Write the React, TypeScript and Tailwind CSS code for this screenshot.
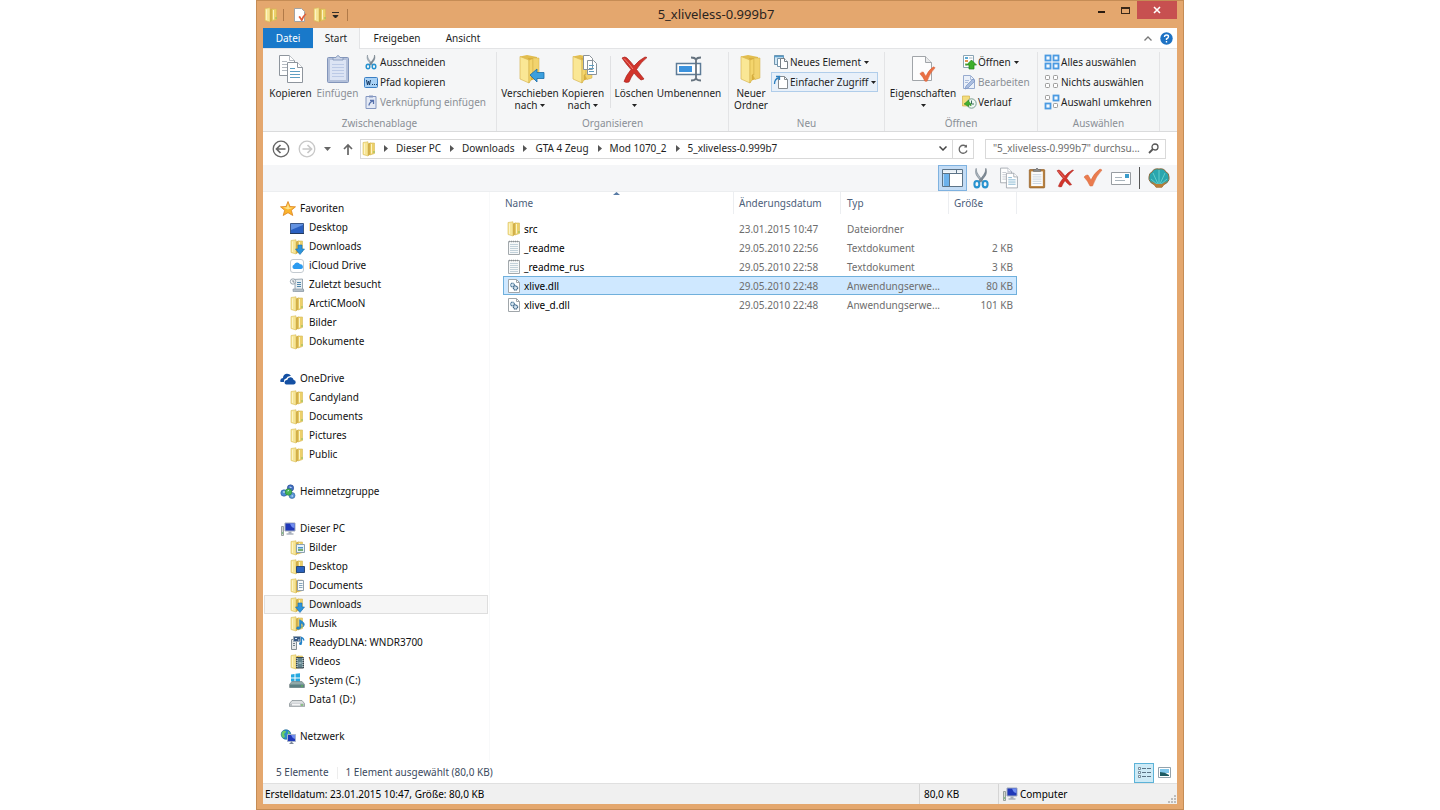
import React from "react";

type IconProps = { className?: string };

function Folder({ className = "h-4 w-4", children }: IconProps & { children?: React.ReactNode }) {
  return (
    <svg className={className} viewBox="0 0 16 16">
      <path d="M2 1.500 7 .8V15L2 13.500z" fill="#f7e596" stroke="#d9bd59" strokeWidth=".6" />
      <path d="M7 2.500 9.500 1.500v12L7 15z" fill="#d2ae48" />
      <path d="M9 2h4.500v10.500L9 14z" fill="#ecd06a" stroke="#d6ba58" strokeWidth=".6" />
      <path d="M3.500 2.500v10.500M10.500 3v9.500" stroke="#fdf4c4" />
      <path d="M13 10v2" stroke="#8fbf5a" />
      {children}
    </svg>
  );
}

function BigFolder({ children }: { children?: React.ReactNode }) {
  return (
    <svg className="h-[30px] w-[30px]" viewBox="0 0 30 30">
      <path d="M5 2.500 12 1l10 2v21l-10 3z" fill="#e2bd4e" />
      <path d="M13 4h10v20l-9 3z" fill="#d9ae3c" />
      <path d="M5 2.500 14 6v23L5 25z" fill="#fae795" stroke="#d8b653" strokeWidth=".7" />
      <path d="M14 6 18 4.500V20l-2 1v5l-2 3z" fill="#f4d56c" stroke="#cfa83f" strokeWidth=".5" />
      <path d="M18 4h6v20l-5 1.500-2-4 1-1z" fill="#f2d36d" stroke="#d3ae48" strokeWidth=".5" />
      {children}
    </svg>
  );
}

function Pages({ className = "h-[30px] w-[30px]" }: IconProps) {
  return (
    <svg className={className} viewBox="0 0 30 30" fill="#fff" stroke="#8e959d">
      <path d="M3.500 1.500h10l5 5v15h-15z" />
      <path d="M13.500 1.500v5h5M6 7.500h5M6 10.500h5M6 13.500h5M6 16.500h5" stroke="#b5bbc2" />
      <path d="M11.500 8.500h10l5 5v15h-15z" />
      <path d="M21.500 8.500v5h5" />
      <path d="M14 14.500h5M14 17.500h10M14 20.500h10M14 23.500h10" stroke="#5f9fc2" />
    </svg>
  );
}

function Clipboard({ className = "h-[30px] w-[30px]", faded = false }: IconProps & { faded?: boolean }) {
  const edge = faded ? "#8295ba" : "#94622b";
  return (
    <svg className={className} viewBox="0 0 30 30">
      <rect x="4.500" y="3.500" width="21" height="25" rx="1" fill={faded ? "#b3c0da" : "#b9803c"} stroke={edge} />
      <path d="M7 6h16v20H7z" fill={faded ? "#dce4f4" : "#fbfbfb"} />
      <path d="M9 10.500h12M9 13.500h12M9 16.500h12M9 19.500h12M9 22.500h12" stroke={faded ? "#bccae6" : "#b7c7d7"} />
      <path d="M10 6V3.500h3q2-4 4 0h3V6z" fill={faded ? "#cbd5e8" : "#8b8d8f"} stroke={faded ? "#7f93b8" : "#666"} strokeWidth=".8" />
    </svg>
  );
}

function Scissors({ className = "h-4 w-4" }: IconProps) {
  return (
    <svg className={className} viewBox="0 0 16 16" fill="none">
      <path d="M4.500 1c0 3 1.500 5 5.500 9.500L8.500 11 5 6.500C4 5 3.800 3 4.500 1z" fill="#aeb9c2" stroke="#77838e" strokeWidth=".5" />
      <path d="M11.500 1c0 3-1.500 5-5.500 9.500L7.500 11 11 6.500C12 5 12.200 3 11.500 1z" fill="#7e8c98" stroke="#66727c" strokeWidth=".5" />
      <ellipse cx="5" cy="12.500" rx="1.800" ry="2.300" stroke="#2792cf" strokeWidth="1.500" />
      <ellipse cx="11" cy="12.500" rx="1.800" ry="2.300" stroke="#2792cf" strokeWidth="1.500" />
    </svg>
  );
}

function RedX({ className = "h-[30px] w-[30px]" }: IconProps) {
  return (
    <svg className={className} viewBox="0 0 30 30">
      <path d="M3 4q3-2 5 0 4 4 7 8 5-6 11-9l2 .5Q22 8 17.500 15.500 21 20 25 25l-3 1q-4-3-7-7-3 4-5 9-3 1-5-.5 2-6 7-12Q7 10 3 4z" fill="#d2342b" stroke="#a8221d" strokeWidth=".7" />
      <path d="M5 4.500q5 5 9 10.500" stroke="#ee8278" fill="none" />
    </svg>
  );
}

const CHECK = "M1 9q2-2.500 4-2l3 5Q11 5 17 1l2 1q-6 6-9.500 16H7Q5 13 1 9z";

function DocCheck() {
  return (
    <svg className="h-[30px] w-[30px]" viewBox="0 0 30 30">
      <path d="M4.500 2.500h13l6 6v18h-19z" fill="#fdfdfd" stroke="#a1a5a9" />
      <path d="M17.500 2.500v6h6" fill="#e9eaeb" stroke="#a1a5a9" />
      <path d={CHECK} transform="translate(11 12) scale(.85)" fill="#ea7044" stroke="#cf5a32" strokeWidth=".5" />
    </svg>
  );
}

function CheckMark() {
  return (
    <svg className="h-5 w-5" viewBox="0 0 20 20">
      <path d={CHECK} fill="#ea7b4e" stroke="#d4683c" strokeWidth=".5" />
    </svg>
  );
}

function Rename() {
  return (
    <svg className="h-[30px] w-[30px]" viewBox="0 0 30 30" fill="none">
      <path d="M2.500 9.500h24v11h-24z" fill="#fff" stroke="#5d7b97" strokeWidth="1.500" />
      <path d="M5 12h13v6H5z" fill="#3b92dd" />
      <path d="M17 3.500q4 0 5 2 1-2 5-2M22 5v20M17 26.500q4 0 5-2 1 2 5 2" stroke="#66737f" strokeWidth="1.800" />
    </svg>
  );
}

function PathIcon() {
  return (
    <svg className="h-4 w-4" viewBox="0 0 16 16">
      <rect x="1.500" y="3.500" width="13" height="10" rx="1" fill="#a8d1f5" stroke="#3b7fc4" />
      <path d="m3.500 6 1 5 1-4 1 4 1-5M9 10.500h1M11 10.500h1M13 10.500h1" fill="none" stroke="#173a63" />
    </svg>
  );
}

function ShortcutIcon() {
  return (
    <svg className="h-4 w-4" viewBox="0 0 16 16" fill="none">
      <path d="M3 2.500h10v12H3z" fill="#e3e9f5" stroke="#8497c0" />
      <path d="M6 1.500h4v2H6z" fill="#8497c0" />
      <path d="M6 11.500q0-3 4-4.500M7 6.500h3.500V10" stroke="#5470ac" strokeWidth="1.300" />
    </svg>
  );
}

function NewItem() {
  return (
    <svg className="h-4 w-4" viewBox="0 0 16 16" fill="#fff" stroke="#7295ad">
      <path d="M1.500 1.500h9v9h-9z" fill="#cfe6f5" />
      <path d="M1 2.500h10" stroke="#5b9cc8" strokeWidth="1.500" />
      <path d="M4.500 4.500h6v8h-6z" />
      <path d="M7.500 4.500h4l3 3v7h-7z" stroke="#777f86" />
      <path d="M11.500 4.500v3h3" stroke="#777f86" />
    </svg>
  );
}

function EasyAccess() {
  return (
    <svg className="h-4 w-4" viewBox="0 0 16 16" fill="none">
      <path d="M5.500 2.500h6l3 3v9h-9z" fill="#fff" stroke="#848b91" />
      <path d="M11.500 2.500v3h3" stroke="#848b91" />
      <path d="M1.500 10q0-5 4-6M3 2.500h3.500V6" stroke="#2d7fbe" strokeWidth="1.300" />
    </svg>
  );
}

function OpenIcon() {
  return (
    <svg className="h-4 w-4" viewBox="0 0 16 16">
      <path d="M2.500 1.500h10v12h-10z" fill="#fff" stroke="#8aa5b5" />
      <path d="M4 3h3v2H4z" fill="#5aa9d5" />
      <path d="M4 6h3v2H4z" fill="#e4924f" />
      <path d="M4 9.500h2v2H4z" fill="#6bab54" />
      <path d="M8 4h3.500" stroke="#a7b6c0" />
      <path d="m10.500 6 5 5H13v4H8v-4H5.500z" fill="#3dae2b" stroke="#23821a" strokeWidth=".7" />
    </svg>
  );
}

function EditIcon() {
  return (
    <svg className="h-4 w-4" viewBox="0 0 16 16">
      <path d="M2.500 1.500h7l4 4v9h-11z" fill="#eaf0f9" stroke="#97abcf" />
      <path d="M9.500 1.500v4h4M4 6.500h4M4 8.500h3" fill="none" stroke="#abbcda" />
      <path d="m5 12 7-7 2 2-7 7-3 1z" fill="#a9bde0" stroke="#7892c2" strokeWidth=".7" />
    </svg>
  );
}

function HistoryIcon() {
  return (
    <svg className="h-4 w-4" viewBox="0 0 16 16">
      <path d="M1.500 2h7v10h-7z" fill="#f3dd7e" stroke="#cda937" strokeWidth=".6" />
      <circle cx="10.500" cy="9.500" r="4.700" fill="#edf7f1" stroke="#7b9e90" />
      <path d="M10.500 6.500V10H13" fill="none" stroke="#3d6c5c" />
      <path d="m3 10 5-4v2q2.500 1 2 4-1-2-2-1.500v2z" fill="#43b02f" stroke="#247f1d" strokeWidth=".5" />
    </svg>
  );
}

function Tiles({ on }: { on: [boolean, boolean, boolean, boolean] }) {
  const at = [[1, 1], [9, 1], [1, 9], [9, 9]];
  return (
    <svg className="h-4 w-4" viewBox="0 0 16 16">
      {on.map((lit, i) =>
        lit ? (
          <rect key={i} x={at[i][0] + 0.5} y={at[i][1] + 0.5} width="5" height="5" fill="#f4faff" stroke="#4a9ae2" strokeWidth="1.800" />
        ) : (
          <rect key={i} x={at[i][0] + 0.5} y={at[i][1] + 0.5} width="4" height="4" rx=".8" fill="#fff" stroke="#9a9a9a" />
        )
      )}
    </svg>
  );
}

function Computer({ className = "h-4 w-4" }: IconProps) {
  return (
    <svg className={className} viewBox="0 0 16 16">
      <path d="M1.500 5.500h2v9h-2z" fill="#d4d8d4" stroke="#87918c" strokeWidth=".8" />
      <path d="M2 12h1" stroke="#33b13b" />
      <path d="M5 2h10v8H5z" fill="#2038b8" stroke="#9fa9bd" />
      <path d="M10 2.500h4.500V7q-3 0-4.500-4.500z" fill="#6f8cf0" />
      <path d="M8.500 10.500h3v2h-3z" fill="#a3abb8" />
      <path d="M6.500 13h7" stroke="#8690a0" />
    </svg>
  );
}

function Star() {
  return (
    <svg className="h-4 w-4" viewBox="0 0 16 16">
      <path d="m8 .5 2 5 5.500.3-4.200 3.500 1.500 5.200L8 11.700l-4.800 2.800 1.500-5.200L.5 5.800 6 5.500z" fill="#fbb42c" stroke="#dc8420" strokeWidth=".8" />
      <path d="m8 2.500 1.200 4 4 .2L8 8.500l-5-2 3.800-.2z" fill="#fee28a" />
    </svg>
  );
}

function Monitor() {
  return (
    <svg className="h-4 w-4" viewBox="0 0 16 16">
      <path d="M1.500 3.500h13v10h-13z" fill="#2a60c1" stroke="#3c5888" />
      <path d="M2 4h12v1L2 10z" fill="#6493e1" />
      <path d="M1 13.500h14" stroke="#223a61" />
    </svg>
  );
}

function ICloud() {
  return (
    <svg className="h-4 w-4" viewBox="0 0 16 16">
      <rect x="1.500" y="1.500" width="13" height="13" rx="2.500" fill="#fff" stroke="#c4cbd1" />
      <path d="M5 11a2.200 2.200 0 0 1 0-4.200 3.300 3.300 0 0 1 6-.5A2.400 2.400 0 0 1 12 11z" fill="#2c9bf0" />
    </svg>
  );
}

function Recent() {
  return (
    <svg className="h-4 w-4" viewBox="0 0 16 16">
      <path d="M4 2.500 13.500 2v10l1.500 2H6V5z" fill="#e7edf1" stroke="#8796a1" strokeWidth=".8" />
      <path d="M8 5.500H12M8 7.500H12M8 9.500H12" stroke="#4f86ab" />
      <circle cx="4" cy="4.500" r="2.700" fill="#f6f7f8" stroke="#8796a1" strokeWidth=".8" />
      <path d="M4 3v2h1.500" fill="none" stroke="#596873" strokeWidth=".7" />
      <path d="M4 12h10.500v2.500H4z" fill="#b3bfc8" stroke="#8796a1" strokeWidth=".6" />
    </svg>
  );
}

function OneDrive() {
  return (
    <svg className="h-4 w-4" viewBox="0 0 16 16" fill="#1450a3">
      <path d="M.5 11q-1-3.500 2.500-4Q3 3.500 6.500 2.800 9.500 2.500 11 5 7.500 4.500 6.200 7.500 3.500 8 4 11z" />
      <path d="M6.500 13.500Q4 13 4.700 10.500 5.300 8.800 7.200 9 8 5.800 11 6.200q2.300.5 2.700 2.800 2.300.3 2 2.700-.3 1.800-2.200 1.800z" />
    </svg>
  );
}

function HomeGroup() {
  return (
    <svg className="h-4 w-4" viewBox="0 0 16 16">
      <circle cx="4" cy="9" r="3.200" fill="#4c8cd2" stroke="#24589a" strokeWidth=".6" />
      <circle cx="10.500" cy="4" r="3.200" fill="#416fc0" stroke="#294d91" strokeWidth=".6" />
      <circle cx="12" cy="11.500" r="3" fill="#5a96d6" stroke="#2e609b" strokeWidth=".6" />
      <circle cx="8.500" cy="8" r="3.300" fill="#47b455" stroke="#23803a" strokeWidth=".6" />
      <path d="M3 8h2M9.500 3l2 .5M7.500 7 9 6.500M11.500 12h1.500" stroke="#dff2ff" />
    </svg>
  );
}

function MediaServer() {
  return (
    <svg className="h-4 w-4" viewBox="0 0 16 16">
      <path d="M2.500 4.500h5v10h-5z" fill="#e5e8e9" stroke="#858f95" />
      <path d="M4 8.500h2M4 10.500h2" stroke="#73808a" />
      <path d="M4.500 1.500h7v5h-7z" fill="#365985" stroke="#9aa9b7" />
      <path d="M6 3.500h2M9 5h1.500" stroke="#d8e8f6" />
      <path d="M12.500 8V2.500q2 .5 2.500 3" fill="none" stroke="#2283c9" strokeWidth="1.300" />
      <circle cx="11.500" cy="8.500" r="1.500" fill="#2283c9" />
    </svg>
  );
}

function Drive({ system = false }: { system?: boolean }) {
  return (
    <svg className="h-4 w-4" viewBox="0 0 16 16">
      {system && <path d="M2 1.500 5.500 1v3.500H2zM6.500.8 11 .2v4.300H6.500zM2 5.500h3.500V9L2 8.500zM6.500 5.500H11v4.200L6.500 9z" fill="#25a9e0" />}
      <path d="M3 8.500h10l2.500 3v3H.5v-3z" fill={system ? "#8fa9a9" : "#dde0e2"} stroke="#7c8789" strokeWidth=".7" />
      <path d="M1 11.500h14v3H1z" fill={system ? "#5b7f82" : "#b8bdc0"} />
      {!system && <path d="M3 11.800h8v1.700H3z" fill="#f4f5f6" />}
      <path d="M12 13h2" stroke="#5fc34a" />
    </svg>
  );
}

function Network() {
  return (
    <svg className="h-4 w-4" viewBox="0 0 16 16">
      <circle cx="6" cy="5.500" r="4.800" fill="#2b8ec7" stroke="#17618f" strokeWidth=".6" />
      <path d="M3 2q3-1 3 1L4 5l1 3-2 1Q0 5 3 2zM8 2l2 2-2 2z" fill="#6bcb66" />
      <path d="M7.500 5.500h8v7h-8z" fill="#2038b8" stroke="#a8b4cc" />
      <path d="M11 6h4v4q-3-1-4-4z" fill="#6f8cf0" />
      <path d="M11 13h1v1h-1zM9.500 14.500h4" fill="#7d889b" stroke="#7d889b" />
    </svg>
  );
}

function TextFile() {
  return (
    <svg className="h-4 w-4" viewBox="0 0 16 16">
      <path d="M2.500 1.500h11v13h-11z" fill="#f6f8f9" stroke="#a3a9ad" />
      <path d="M3 1.500h10" stroke="#8b9195" strokeWidth="1.500" strokeDasharray="1 1" />
      <path d="M4 4.500h8M4 6.500h8M4 8.500h8M4 10.500h8M4 12.500h8" stroke="#c2d1da" />
    </svg>
  );
}

function DllFile() {
  return (
    <svg className="h-4 w-4" viewBox="0 0 16 16" fill="none">
      <path d="M2.500 1.500h8l3 3v10h-11z" fill="#fff" stroke="#a0a6aa" />
      <path d="M10.500 1.500v3h3" stroke="#a0a6aa" />
      <circle cx="6.500" cy="7" r="1.900" fill="#d4e4f0" stroke="#567e9e" strokeWidth="1.200" strokeDasharray="1.200 .4" />
      <circle cx="9.500" cy="10" r="2.100" fill="#d4e4f0" stroke="#43698a" strokeWidth="1.300" strokeDasharray="1.200 .4" />
    </svg>
  );
}

const overlays = {
  down: <path d="M9 6h4v4h2.500L11 15.500 6.500 10H9z" fill="#2d94dc" stroke="#1b6fae" strokeWidth=".6" />,
  picture: (
    <>
      <path d="M7.500 4.500h8v8h-8z" fill="#eaf4fa" stroke="#8ba0ae" />
      <path d="M9 7h5v1.500H9z" fill="#4b95c8" />
      <path d="M9 9h5v2H9z" fill="#76ae72" />
    </>
  ),
  desktop: <path d="M7.500 7.500h8v6h-8z" fill="#2b62bd" stroke="#274777" />,
  doc: (
    <>
      <path d="M8.500 2.500h6v10h-6z" fill="#f8fafb" stroke="#93a0aa" />
      <path d="M10 5.500h3.500M10 7.500h3.500M10 9.500h3.500" stroke="#86a6bd" />
    </>
  ),
  music: <path d="M10.500 3.500V11q-3-1-3 1.500 2 2 4.500-.5V7q3 1 2 4 3-3-.5-5.500z" fill="#268ccf" stroke="#1c72ad" strokeWidth=".5" />,
  video: (
    <>
      <path d="M7.500 3.500h7v10.500h-7z" fill="#62838d" stroke="#39444b" />
      <path d="M8 4v10M14 4v10" stroke="#e8eef0" strokeDasharray="1 1" />
      <path d="M9.500 9h3" stroke="#c0d8dc" />
    </>
  ),
};

type NavEntry = { label: string; icon: React.ReactNode; current?: boolean };
const plain = (label: string): NavEntry => ({ label, icon: <Folder /> });

const navGroups: { head: NavEntry; items: NavEntry[] }[] = [
  {
    head: { label: "Favoriten", icon: <Star /> },
    items: [
      { label: "Desktop", icon: <Monitor /> },
      { label: "Downloads", icon: <Folder>{overlays.down}</Folder> },
      { label: "iCloud Drive", icon: <ICloud /> },
      { label: "Zuletzt besucht", icon: <Recent /> },
      plain("ArctiCMooN"),
      plain("Bilder"),
      plain("Dokumente"),
    ],
  },
  {
    head: { label: "OneDrive", icon: <OneDrive /> },
    items: [plain("Candyland"), plain("Documents"), plain("Pictures"), plain("Public")],
  },
  { head: { label: "Heimnetzgruppe", icon: <HomeGroup /> }, items: [] },
  {
    head: { label: "Dieser PC", icon: <Computer /> },
    items: [
      { label: "Bilder", icon: <Folder>{overlays.picture}</Folder> },
      { label: "Desktop", icon: <Folder>{overlays.desktop}</Folder> },
      { label: "Documents", icon: <Folder>{overlays.doc}</Folder> },
      { label: "Downloads", icon: <Folder>{overlays.down}</Folder>, current: true },
      { label: "Musik", icon: <Folder>{overlays.music}</Folder> },
      { label: "ReadyDLNA: WNDR3700", icon: <MediaServer /> },
      { label: "Videos", icon: <Folder>{overlays.video}</Folder> },
      { label: "System (C:)", icon: <Drive system /> },
      { label: "Data1 (D:)", icon: <Drive /> },
    ],
  },
  { head: { label: "Netzwerk", icon: <Network /> }, items: [] },
];

const files = [
  { name: "src", date: "23.01.2015 10:47", type: "Dateiordner", size: "", icon: <Folder /> },
  { name: "_readme", date: "29.05.2010 22:56", type: "Textdokument", size: "2 KB", icon: <TextFile /> },
  { name: "_readme_rus", date: "29.05.2010 22:58", type: "Textdokument", size: "3 KB", icon: <TextFile /> },
  { name: "xlive.dll", date: "29.05.2010 22:48", type: "Anwendungserwe...", size: "80 KB", icon: <DllFile />, selected: true },
  { name: "xlive_d.dll", date: "29.05.2010 22:48", type: "Anwendungserwe...", size: "101 KB", icon: <DllFile /> },
];

function Caret() {
  return (
    <svg className="inline-block h-[3px] w-[5px]" viewBox="0 0 5 3">
      <path d="M0 0h5L2.500 3z" fill="#222" />
    </svg>
  );
}

function Group({ label, className, inner = "pl-1", children }: { label: string; className: string; inner?: string; children: React.ReactNode }) {
  return (
    <section className={`flex shrink-0 flex-col justify-between border-r border-[#e3e4e6] ${className}`}>
      <div className={`flex ${inner}`}>{children}</div>
      <div className="text-center leading-4 text-[#8a8f96]">{label}</div>
    </section>
  );
}

function Big({ icon, lines, caret, disabled, className }: { icon: React.ReactNode; lines: string[]; caret?: boolean; disabled?: boolean; className: string }) {
  return (
    <button disabled={disabled} className={`flex flex-col items-center pt-0.5 leading-3 disabled:text-[#8a8f96] ${className}`}>
      <span className="mb-[3px]">{icon}</span>
      {lines.map((l, i) => (
        <span key={l} className="flex items-center gap-[3px] whitespace-nowrap">
          {l}
          {caret && i > 0 && i === lines.length - 1 && <Caret />}
        </span>
      ))}
      {caret && lines.length === 1 && (
        <span className="flex h-3 items-center">
          <Caret />
        </span>
      )}
    </button>
  );
}

function Small({ icon, label, caret, disabled, hot }: { icon: React.ReactNode; label: string; caret?: boolean; disabled?: boolean; hot?: boolean }) {
  return (
    <button
      disabled={disabled}
      className={`flex h-5 items-center gap-px border px-px whitespace-nowrap disabled:text-[#8a8f96] ${hot ? "border-[#b0cdea] bg-[#e8f0f9]" : "border-transparent"}`}
    >
      {icon}
      <span className="mr-0.5">{label}</span>
      {caret && <Caret />}
    </button>
  );
}

function NavRow({ entry, nested }: { entry: NavEntry; nested?: boolean }) {
  return (
    <a
      href="#"
      aria-current={entry.current ? "page" : undefined}
      className={`flex h-[19px] items-center gap-1 border ${nested ? "pl-6" : "pl-[15px]"} ${entry.current ? "border-[#dedede] bg-[#f6f6f6]" : "border-transparent"}`}
    >
      {entry.icon}
      {entry.label}
    </a>
  );
}

function Crumb({ label }: { label: string }) {
  return (
    <a href="#" className="flex items-center whitespace-nowrap">
      <svg className="mr-2 ml-[9px] h-[7px] w-1" viewBox="0 0 4 7">
        <path d="M0 0v7l4-3.500z" fill="#555" />
      </svg>
      {label}
    </a>
  );
}

const toolIcons: { label: string; icon: React.ReactNode }[] = [
  { label: "Ausschneiden", icon: <Scissors className="h-[22px] w-[22px]" /> },
  { label: "Kopieren", icon: <Pages className="h-[22px] w-[22px]" /> },
  { label: "Einfügen", icon: <Clipboard className="h-[22px] w-[22px]" /> },
  { label: "Löschen", icon: <RedX className="h-5 w-5" /> },
  { label: "Eigenschaften", icon: <CheckMark /> },
  {
    label: "Mail",
    icon: (
      <svg className="h-5 w-5" viewBox="0 0 20 20">
        <path d="M.5 4.500h19v12H.5z" fill="#fff" stroke="#989da2" />
        <path d="M14 6h4v4h-4z" fill="#3b9ccb" />
        <path d="M4 9.500h7M4 12.500h10" stroke="#a9b4bc" />
      </svg>
    ),
  },
];

export default function App() {
  return (
    <div className="flex min-h-screen justify-center bg-white font-['Noto_Sans',sans-serif] text-[10px] text-[#1e1e1e]">
      <main className="flex w-full max-w-[928px] flex-col border border-[#c58c55] bg-[#e4a76e] px-1.5 pb-[5px]">
        <header className="grid h-[27px] grid-cols-[1fr_auto_1fr] items-center">
          <div className="flex items-center">
            <Folder />
            <span className="ml-1 h-3 w-px bg-[#b17a48]" />
            <button aria-label="Eigenschaften" className="ml-2">
              <svg className="h-4 w-4" viewBox="0 0 16 16">
                <path d="M2.500 1.500h7l3 3v10h-10z" fill="#fff" stroke="#a3a3a3" />
                <path d={CHECK} transform="translate(6 6) scale(.45)" fill="#e05c38" />
              </svg>
            </button>
            <button aria-label="Neuer Ordner" className="ml-1"><Folder /></button>
            <button aria-label="Schnellzugriff anpassen" className="ml-1">
              <svg className="h-2 w-[7px]" viewBox="0 0 7 8">
                <path d="M0 1.500h7M1 4.500h5L3.500 7z" fill="#222" stroke="#222" strokeWidth=".9" />
              </svg>
            </button>
            <span className="ml-2 h-3 w-px bg-[#b17a48]" />
          </div>
          <h1 className="pr-2 text-[13px] font-normal text-[#2b241e]">5_xliveless-0.999b7</h1>
          <div className="flex items-start justify-end self-start">
            <button aria-label="Minimieren" className="flex h-[18px] w-6 items-center justify-center">
              <span className="mt-1 h-0.5 w-[7px] bg-[#2a1b10]" />
            </button>
            <button aria-label="Maximieren" className="flex h-[18px] w-6 items-center justify-center">
              <span className="h-[7px] w-[9px] border border-t-2 border-[#3a2818]" />
            </button>
            <button aria-label="Schließen" className="flex h-[18px] w-10 items-center justify-center bg-[#c75050]">
              <svg className="h-2 w-2" viewBox="0 0 8 8"><path d="m1 1 6 6M7 1 1 7" stroke="#fff" strokeWidth="1.600" /></svg>
            </button>
          </div>
        </header>

        <div className="flex flex-1 flex-col bg-white">
          <nav className="flex h-[21px] items-stretch border-b border-[#e3e4e6]" aria-label="Menüband">
            <button className="w-[50px] bg-[#1979ca] text-white">Datei</button>
            <button className="-mb-px w-[47px] border-r border-[#e3e4e6] bg-[#f5f6f7]">Start</button>
            <button className="w-[74px]">Freigeben</button>
            <button className="w-[58px]">Ansicht</button>
            <div className="ml-auto flex items-center gap-2 pr-1">
              <button aria-label="Menüband minimieren">
                <svg className="h-[5px] w-2" viewBox="0 0 8 5"><path d="m.5 4.500 3.500-3.500 3.500 3.500" fill="none" stroke="#777" strokeWidth="1.300" /></svg>
              </button>
              <button aria-label="Hilfe">
                <svg className="h-[13px] w-[13px]" viewBox="0 0 13 13">
                  <circle cx="6.500" cy="6.500" r="6.200" fill="#1d72c4" />
                  <path d="M4.500 5q0-2 2-2t2 1.700Q8.500 6 6.500 7v1M6.500 9v1.500" fill="none" stroke="#fff" strokeWidth="1.400" />
                </svg>
              </button>
            </div>
          </nav>

          <div className="flex h-[83px] overflow-hidden border-b border-[#dadbdc] bg-[#f5f6f7] pt-[3px]">
            <Group label="Zwischenablage" className="w-[234px]">
              <Big className="w-[47px]" icon={<Pages />} lines={["Kopieren"]} />
              <Big className="w-[47px]" icon={<Clipboard faded />} lines={["Einfügen"]} disabled />
              <div className="flex flex-col items-start">
                <Small icon={<Scissors />} label="Ausschneiden" />
                <Small icon={<PathIcon />} label="Pfad kopieren" />
                <Small icon={<ShortcutIcon />} label="Verknüpfung einfügen" disabled />
              </div>
            </Group>
            <Group label="Organisieren" className="w-[232px]">
              <Big
                className="w-[58px]"
                icon={
                  <BigFolder>
                    <path d="m15 21 7-6v3.500h7v6h-7V28z" fill="#3ba0de" stroke="#1b6ca8" strokeWidth=".8" />
                  </BigFolder>
                }
                lines={["Verschieben", "nach"]}
                caret
              />
              <Big
                className="w-[48px]"
                icon={
                  <BigFolder>
                    <path d="M15.500 1.500h6l3 3v11h-9zM19.500 6.500h6l3 3v11h-9z" fill="#fff" stroke="#8a939b" />
                    <path d="M21 11.500h5M21 14.500h5M21 17.500h5" stroke="#5f9fc2" />
                  </BigFolder>
                }
                lines={["Kopieren", "nach"]}
                caret
              />
              <span className="mx-[3px] mt-1 h-[52px] w-px bg-[#e0e1e3]" />
              <Big className="w-[40px]" icon={<RedX />} lines={["Löschen"]} caret />
              <Big className="w-[70px]" icon={<Rename />} lines={["Umbenennen"]} />
            </Group>
            <Group label="Neu" className="w-[156px]" inner="pl-0.5">
              <Big className="w-[40px]" icon={<BigFolder />} lines={["Neuer", "Ordner"]} />
              <div className="flex flex-col items-stretch">
                <Small icon={<NewItem />} label="Neues Element" caret />
                <Small icon={<EasyAccess />} label="Einfacher Zugriff" caret hot />
              </div>
            </Group>
            <Group label="Öffnen" className="w-[153px]" inner="pl-0.5">
              <Big className="w-[72px]" icon={<DocCheck />} lines={["Eigenschaften"]} caret />
              <div className="flex flex-col items-start">
                <Small icon={<OpenIcon />} label="Öffnen" caret />
                <Small icon={<EditIcon />} label="Bearbeiten" disabled />
                <Small icon={<HistoryIcon />} label="Verlauf" />
              </div>
            </Group>
            <Group label="Auswählen" className="w-[122px]">
              <div className="flex flex-col items-start">
                <Small icon={<Tiles on={[true, true, true, true]} />} label="Alles auswählen" />
                <Small icon={<Tiles on={[false, false, false, false]} />} label="Nichts auswählen" />
                <Small icon={<Tiles on={[false, true, true, false]} />} label="Auswahl umkehren" />
              </div>
            </Group>
          </div>

          <div className="flex h-[33px] items-center pr-[11px] pl-[9px]">
            <button aria-label="Zurück">
              <svg className="h-[18px] w-[18px]" viewBox="0 0 18 18" fill="none" stroke="#666" strokeWidth="1.300">
                <circle cx="9" cy="9" r="7.800" />
                <path d="M13.500 9h-9M8.500 5l-4 4 4 4" strokeWidth="1.700" />
              </svg>
            </button>
            <button aria-label="Vorwärts" className="ml-2">
              <svg className="h-[18px] w-[18px]" viewBox="0 0 18 18" fill="none" stroke="#c8c8c8" strokeWidth="1.300">
                <circle cx="9" cy="9" r="7.800" />
                <path d="M4.500 9h9M9.500 5l4 4-4 4" strokeWidth="1.700" />
              </svg>
            </button>
            <button aria-label="Verlauf anzeigen" className="ml-2">
              <svg className="h-1 w-[7px]" viewBox="0 0 7 4"><path d="M0 0h7L3.500 4z" fill="#666" /></svg>
            </button>
            <button aria-label="Nach oben" className="ml-3">
              <svg className="h-3 w-[10px]" viewBox="0 0 10 12"><path d="M5 12V2M1 6l4-4 4 4" fill="none" stroke="#666" strokeWidth="1.700" /></svg>
            </button>
            <div className="ml-[7px] flex h-5 min-w-0 flex-1 items-center border border-[#d9d9d9]">
              <Folder />
              <span className="-ml-0.5 flex min-w-0 flex-1">
                {["Dieser PC", "Downloads", "GTA 4 Zeug", "Mod 1070_2", "5_xliveless-0.999b7"].map((c) => (
                  <Crumb key={c} label={c} />
                ))}
              </span>
              <button aria-label="Vorherige Orte" className="px-[5px]">
                <svg className="h-[5px] w-2" viewBox="0 0 8 5"><path d="m.5.500 3.500 3.500 3.500-3.500" fill="none" stroke="#444" strokeWidth="1.500" /></svg>
              </button>
              <button aria-label="Aktualisieren" className="flex h-full w-[21px] items-center justify-center border-l border-[#d9d9d9]">
                <svg className="h-3 w-3" viewBox="0 0 12 12">
                  <path d="M9.500 4A4 4 0 1 0 10 7.500" fill="none" stroke="#666" strokeWidth="1.300" />
                  <path d="M7 4.500h3V1.500z" fill="#666" />
                </svg>
              </button>
            </div>
            <label className="ml-[11px] flex h-5 w-[181px] items-center border border-[#d9d9d9] pr-[6px] pl-[7px]">
              <input
                type="text"
                aria-label="Suchen"
                placeholder={'"5_xliveless-0.999b7" durchsu...'}
                className="w-[154px] min-w-0 flex-none outline-none placeholder:text-[#6d6d6d]"
              />
              <svg className="ml-auto h-[11px] w-[11px] shrink-0" viewBox="0 0 11 11" fill="none" stroke="#555">
                <circle cx="7" cy="4" r="3" strokeWidth="1.300" />
                <path d="m5 6-4 4" strokeWidth="1.800" />
              </svg>
            </label>
          </div>

          <div className="flex h-[27px] items-center justify-end border-b border-[#eceef0] bg-[#f5f6f8] pr-[7px]">
            <button aria-label="Navigationsbereich" className="flex h-[26px] w-[29px] items-center justify-center border border-[#7fb2e0] bg-[#c3dcf5]">
              <svg className="h-5 w-[21px]" viewBox="0 0 21 20">
                <path d="M.5 1.500h20v17H.5z" fill="#fff" stroke="#5c7387" />
                <path d="M1.500 6H7v12H1.500z" fill="#6cb2ec" />
                <path d="M1 2h19v2.500H1z" fill="#e8eff5" />
                <path d="M1 5.500h19M7.500 5v13M14.500 2v3" stroke="#5c7387" />
              </svg>
            </button>
            {toolIcons.map((t) => (
              <button key={t.label} aria-label={t.label} className="flex h-[26px] w-[28px] items-center justify-center">
                {t.icon}
              </button>
            ))}
            <span className="ml-1 h-[22px] w-px bg-[#555]" />
            <button aria-label="Classic Shell" className="ml-2">
              <svg className="h-[22px] w-[22px]" viewBox="0 0 22 22">
                <path d="M7 18Q0 15 1 10 1 6 4 5 6 1 11 2q5-1 7 3 3 1 3 5 1 5-6 8l-1 2H8z" fill="#29a6ae" stroke="#8e6b3c" />
                <path d="M10 18 3 12M10.500 18 5 6M11 18V3M11.500 18 17 6M12 18l7-6" stroke="#62cdcb" />
                <path d="m3 14 5 3h6l5-3-3 4-2 2.500H8L6 18z" fill="#b77d39" />
              </svg>
            </button>
          </div>

          <div className="flex flex-1">
            <nav aria-label="Ordner" className="flex w-[227px] shrink-0 flex-col gap-[18px] border-r border-[#f8f9fa] pt-[7px] pr-px pl-px text-[#111]">
              {navGroups.map((g) => (
                <div key={g.head.label}>
                  <NavRow entry={g.head} />
                  {g.items.map((e) => (
                    <NavRow key={e.label} entry={e} nested />
                  ))}
                </div>
              ))}
            </nav>
            <div className="min-w-0 flex-1 pl-[13px]">
              <table className="w-[514px] table-fixed border-separate border-spacing-0">
                <colgroup>
                  <col className="w-[231px]" />
                  <col className="w-[107px]" />
                  <col className="w-[108px]" />
                  <col />
                </colgroup>
                <thead>
                  <tr className="h-[22px] text-left text-[#4c607a]">
                    <th className="relative border-r border-[#eceef1] pl-[2px] font-normal">
                      Name
                      <svg className="absolute top-0 left-[110px] h-[3px] w-[7px]" viewBox="0 0 7 3"><path d="M0 3h7L3.500 0z" fill="#587ba5" /></svg>
                    </th>
                    <th className="border-r border-[#eceef1] pl-[5px] font-normal">Änderungsdatum</th>
                    <th className="border-r border-[#eceef1] pl-1.5 font-normal">Typ</th>
                    <th className="border-r border-[#eceef1] pl-[5px] font-normal">Größe</th>
                  </tr>
                </thead>
                <tbody>
                  <tr aria-hidden="true" className="h-[5px]"><td colSpan={4} /></tr>
                  {files.map((f) => {
                    const edge = f.selected ? "border-y border-[#70b0dc] bg-[#cfe8ff]" : "border-y border-transparent";
                    return (
                      <tr key={f.name} aria-selected={!!f.selected} className="h-[19px] leading-4 whitespace-nowrap text-[#6d6d6d]">
                        <td className={`border-l p-0 pl-[2px] text-black ${edge}`}>
                          <span className="flex items-center gap-0.5">{f.icon}{f.name}</span>
                        </td>
                        <td className={`p-0 pl-[5px] ${edge}`}>{f.date}</td>
                        <td className={`p-0 pl-1.5 ${edge}`}>{f.type}</td>
                        <td className={`border-r p-0 pr-[3px] text-right ${edge}`}>{f.size}</td>
                      </tr>
                    );
                  })}
                </tbody>
              </table>
            </div>
          </div>

          <div className="flex h-[21px] items-center pr-[6px] pl-[13px] text-[#3b4a5e]">
            <span>5 Elemente</span>
            <span className="mx-2 h-3 w-px bg-[#ededed]" />
            <span>1 Element ausgewählt (80,0 KB)</span>
            <button aria-label="Details" className="ml-auto flex h-5 w-5 items-center justify-center border border-[#5cb3d8] bg-[#cdeaf6]">
              <svg className="h-[13px] w-[14px]" viewBox="0 0 14 13" fill="none" stroke="#5b7486">
                <path d="M1.500 1.500h2v2h-2zM1.500 5.500h2v2h-2zM1.500 9.500h2v2h-2z" fill="#fff" strokeWidth=".8" />
                <path d="M5 2.500h4M10 2.500h4M5 6.500h4M10 6.500h4M5 10.500h4M10 10.500h4" />
              </svg>
            </button>
            <button aria-label="Große Symbole" className="ml-1">
              <svg className="h-[11px] w-[13px]" viewBox="0 0 13 11">
                <path d="M.5.500h12v10H.5z" fill="#fff" stroke="#94a3ad" />
                <path d="M2 2h9v4H2z" fill="#82c8ec" />
                <path d="M2 5q5 0 9 3v1H2z" fill="#1d5a62" />
              </svg>
            </button>
          </div>

          <footer className="flex h-[21px] items-stretch border-t border-[#e0e0e0] bg-[#f0f0f0] leading-5 text-black">
            <span className="flex-1 pl-0.5">Erstelldatum: 23.01.2015 10:47, Größe: 80,0 KB</span>
            <span className="w-[79px] border-l border-[#d5d5d5] pl-1">80,0 KB</span>
            <span className="flex w-[179px] items-center gap-0.5 border-l border-[#d5d5d5] pl-[3px]">
              <Computer />
              Computer
              <svg className="mt-auto ml-auto h-[9px] w-[9px]" viewBox="0 0 9 9">
                <path d="M6 0h2v2H6zM3 3h2v2H3zM6 3h2v2H6zM0 6h2v2H0zM3 6h2v2H3zM6 6h2v2H6z" fill="#bcbcbc" />
              </svg>
            </span>
          </footer>
        </div>
      </main>
    </div>
  );
}
